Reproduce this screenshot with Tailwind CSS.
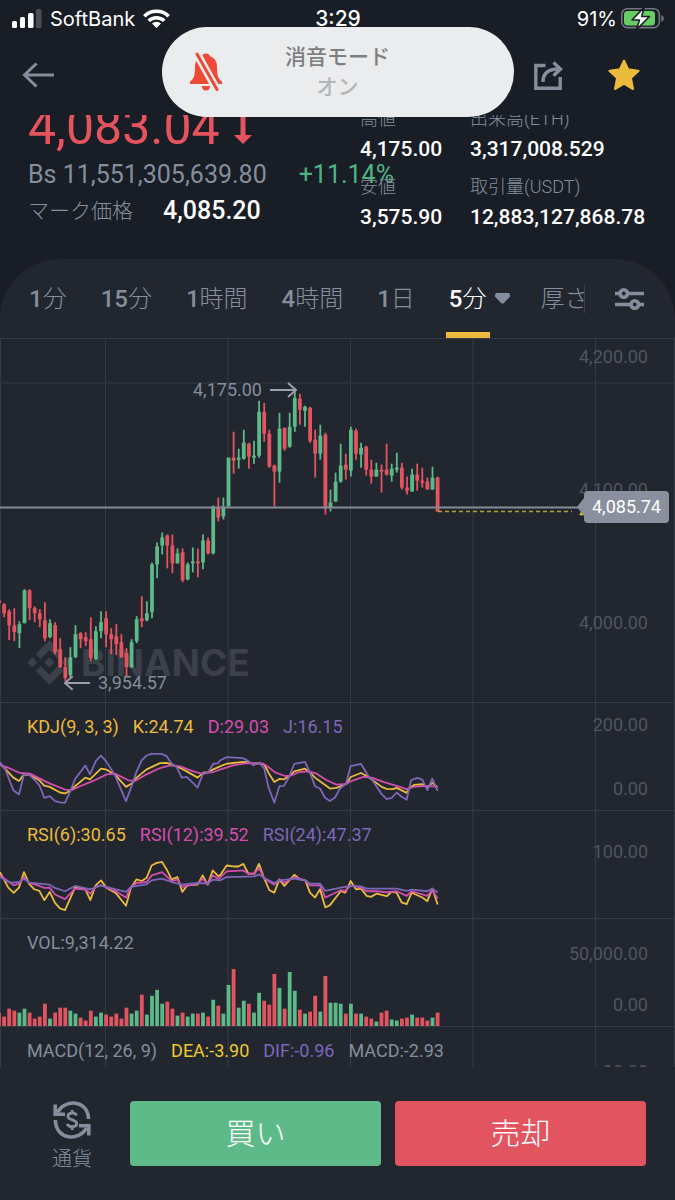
<!DOCTYPE html>
<html lang="ja">
<head>
<meta charset="utf-8">
<meta name="viewport" content="width=device-width, initial-scale=1">
<title>ETH/USDT</title>
<script src="https://cdn.jsdelivr.net/npm/@tailwindcss/browser@4"></script>
</head>
<body class="relative flex min-h-screen flex-col overflow-x-hidden bg-[#191d25] font-['Roboto','Noto_Sans_CJK_JP',sans-serif] text-[#848e9c]">

<!-- Status bar -->
<div class="grid h-[37px] grid-cols-3 items-center pl-3 pr-[11px] font-['Inter','Noto_Sans_CJK_JP',sans-serif] text-[21px] leading-none text-white">
  <div class="flex items-center gap-2">
    <svg class="h-[19px] w-[30px]" viewBox="0 0 30 19" fill="#fff" aria-hidden="true"><rect x="0" y="12" width="5" height="7" rx="1.5"/><rect x="8" y="8" width="5" height="11" rx="1.5"/><rect x="16" y="4" width="5.500" height="15" rx="1.500"/><rect x="24" y="0" width="5.500" height="19" rx="1.500" opacity=".22"/></svg>
    <span class="text-xl">SoftBank</span>
    <svg class="h-[19px] w-[27px]" viewBox="0 0 27 19" fill="none" stroke="#fff" stroke-width="3.600" aria-hidden="true"><path d="M1.300 7.200a17.600 17.600 0 0 1 24.400 0"/><path d="M5.700 11.800a11.300 11.300 0 0 1 15.600 0"/><path d="M9 14.500a6.500 6.500 0 0 1 9 0L13.500 19z" fill="#fff" stroke="none"/></svg>
  </div>
  <div class="text-center font-medium">3:29</div>
  <div class="flex items-center justify-end gap-1">
    <span class="text-xl">91%</span>
    <svg class="h-[21px] w-[43px]" viewBox="0 0 43 21" aria-hidden="true"><rect x=".8" y=".8" width="37.500" height="18.800" rx="5.500" fill="none" stroke="#72767d" stroke-width="1.600"/><rect x="3" y="3" width="31" height="14.500" rx="3.500" fill="#67ce66"/><path d="M40.300 7v7c1.500-.6 2.500-2 2.500-3.500S41.800 7.600 40.300 7z" fill="#72767d"/><path d="M23-.5L11 12h7.500l-3 9.500L28.500 8.500h-7.700z" fill="#fff" stroke="#191d25" stroke-width="1.600" stroke-linejoin="round"/></svg>
  </div>
</div>

<!-- Navigation -->
<header class="flex h-[76px] items-center pl-[22px] pr-[35px]">
  <button class="cursor-pointer" aria-label="戻る"><svg class="h-[26px] w-8" viewBox="0 0 32 26" fill="none" stroke="#848e9c" stroke-width="3"><path d="M14.500 1.500L2.500 13l12 11.500M2.500 13H32"/></svg></button>
  <div class="ml-auto flex items-center gap-[45px]">
    <button class="cursor-pointer" aria-label="共有"><svg class="h-[30px] w-[30px]" viewBox="0 0 30 30" fill="none" stroke="#848e9c" stroke-width="3.400"><path d="M12.500 5.500H2.800v22.700h24.400V17"/><path d="M10 22c0-8 4-13 15.500-13"/><path d="M20.500 2.500L27.500 9l-7 6.800"/></svg></button>
    <button class="cursor-pointer" aria-label="お気に入り"><svg class="h-8 w-8" viewBox="0 0 32 32" fill="#ecba3c" stroke="#ecba3c" stroke-width="2.500" stroke-linejoin="round"><path d="M16 2l4 8.500 10.300 1.400-7.600 7 2 10.900-8.700-5.300-8.700 5.300 2-10.900-7.600-7L12 10.500z"/></svg></button>
  </div>
</header>

<!-- Ticker, scrolled partly under the header -->
<section class="mt-[2px] flex h-[144px] overflow-hidden whitespace-nowrap pl-7">
  <div class="-mt-[18px] w-[332px] shrink-0">
    <div class="flex items-center gap-[14px] text-[50px] leading-[60px] text-[#e5535f]">
      <span>4,083.04</span>
      <svg class="h-[34px] w-[18px]" viewBox="0 0 18 34" fill="#e5535f" aria-hidden="true"><path d="M6.500 0h5v25H18L9 34 0 25h6.500z"/></svg>
    </div>
    <div class="flex gap-8 text-[25px] leading-9"><span>Bs 11,551,305,639.80</span><span class="text-[#4fb483]">+11.14%</span></div>
    <div class="flex gap-[30px] leading-9"><span class="text-[21px] font-light">マーク価格</span><span class="text-[25px] font-medium text-white">4,085.20</span></div>
  </div>
  <dl class="-mt-[10px] w-[110px] shrink-0">
    <dt class="text-lg font-light leading-7">高値</dt>
    <dd class="pb-2 text-[21px] font-medium leading-8 text-white">4,175.00</dd>
    <dt class="text-lg font-light leading-7">安値</dt>
    <dd class="text-[21px] font-medium leading-8 text-white">3,575.90</dd>
  </dl>
  <dl class="-mt-[10px]">
    <dt class="text-lg font-light leading-7">出来高(ETH)</dt>
    <dd class="pb-2 text-[21px] font-medium leading-8 text-white">3,317,008.529</dd>
    <dt class="text-lg font-light leading-7">取引量(USDT)</dt>
    <dd class="text-[21px] font-medium leading-8 text-white">12,883,127,868.78</dd>
  </dl>
</section>

<main class="flex flex-1 flex-col rounded-t-[60px] bg-[#22262f]">
  <!-- Interval tabs -->
  <nav class="flex h-[79px] items-center pl-[29px] pr-[30px]">
    <div class="flex h-full min-w-0 flex-1 items-center gap-[34px] overflow-hidden whitespace-nowrap text-2xl font-light">
      <button class="cursor-pointer"><span class="font-medium">1</span>分</button>
      <button class="cursor-pointer"><span class="font-medium">15</span>分</button>
      <button class="cursor-pointer"><span class="font-medium">1</span>時間</button>
      <button class="cursor-pointer"><span class="font-medium">4</span>時間</button>
      <button class="cursor-pointer"><span class="font-medium">1</span>日</button>
      <button class="relative flex h-full cursor-pointer items-center gap-[9px] text-white"><span><span class="font-medium">5</span>分</span>
        <svg class="h-[11px] w-[15px]" viewBox="0 0 15 11" fill="#848e9c" aria-hidden="true"><path d="M1 0h13l1 1.500V3.500L8.500 10.500h-2L0 3.500v-2z"/></svg>
        <span class="absolute -left-[3px] bottom-0 h-[6px] w-[44px] bg-[#ecba3c]"></span>
      </button>
      <button class="-ml-1 cursor-pointer">厚さ</button>
    </div>
    <span class="h-7 w-px bg-[#3a3f49]"></span>
    <button class="ml-[29px] cursor-pointer" aria-label="設定"><svg class="h-[22px] w-[31px]" viewBox="0 0 31 22" fill="none" stroke="#848e9c" stroke-width="3.600"><path d="M1 5.500h4.500M14 5.500h16M1 16.500h16M25.500 16.500H30"/><circle cx="9.800" cy="5.500" r="3.700"/><circle cx="20.800" cy="16.500" r="3.700"/></svg></button>
  </nav>

  <!-- Price -->
  <section class="relative h-[364px] overflow-hidden border-t border-[#363a44] text-lg">
    <div class="absolute left-[27px] top-[301px] flex items-center gap-[9px] text-[#3b404a]">
      <svg class="h-[45px] w-[45px]" viewBox="0 0 126 126" fill="currentColor" aria-hidden="true"><path d="M38.700 53.200L63 28.900l24.300 24.300 14.100-14.100L63 .7 24.600 39.100zM.7 63l14.100-14.100L28.900 63 14.800 77.100zM38.700 72.800L63 97.100l24.300-24.300 14.200 14.100L63 125.300 24.600 86.900zM97.100 63l14.100-14.100L125.300 63l-14.100 14.100zM77.300 63L63 48.700 48.700 63 63 77.300z"/></svg>
      <span class="font-['Inter',sans-serif] text-[37px] font-bold leading-none">BINANCE</span>
    </div>
    <svg id="price" class="absolute inset-0 h-full w-full" viewBox="0 338 675 364" preserveAspectRatio="none"></svg>
    <div class="relative flex flex-col items-end gap-[109px] pr-[27px] pt-[6px] leading-6 text-[#50555f]"><span>4,200.00</span><span>4,100.00</span><span>4,000.00</span></div>
    <div class="absolute left-[193px] top-[39px] flex items-center gap-2 leading-6">4,175.00
      <svg class="h-4 w-[27px]" viewBox="0 0 27 16" fill="none" stroke="#9aa0ac" stroke-width="2" aria-hidden="true"><path d="M0 8h26M18 1l8 7-8 7"/></svg></div>
    <div class="absolute left-[64px] top-[332px] flex items-center gap-2 leading-6">
      <svg class="h-4 w-[26px]" viewBox="0 0 27 16" fill="none" stroke="#9aa0ac" stroke-width="2" aria-hidden="true"><path d="M27 8H1M9 1L1 8l8 7"/></svg>3,954.57</div>
    <div class="absolute right-[27px] top-[161px] leading-6 text-[#ecba3c]">4,083.04</div>
    <div class="absolute right-[6px] top-[152px] flex items-center">
      <svg class="h-[18px] w-[7px]" viewBox="0 0 7 18" fill="#8b909e" aria-hidden="true"><path d="M7 0L0 9l7 9z"/></svg>
      <span class="rounded bg-[#8b909e] px-2 py-1 leading-6 text-white">4,085.74</span>
    </div>
  </section>

  <!-- KDJ -->
  <section class="relative flex h-[108px] justify-between overflow-hidden border-t border-[#363a44] text-lg">
    <svg id="kdj" class="absolute inset-0 h-full w-full" viewBox="0 6 2025 324" preserveAspectRatio="none"></svg>
    <div class="relative flex h-12 items-center gap-[14px] pl-[27px]"><span class="text-[#ecba3c]">KDJ(9, 3, 3)</span><span class="text-[#ecba3c]">K:24.74</span><span class="text-[#d34fae]">D:29.03</span><span class="text-[#7e66b9]">J:16.15</span></div>
    <div class="relative flex flex-col items-end gap-10 pr-[27px] pt-[10px] leading-6 text-[#50555f]"><span>200.00</span><span>0.00</span></div>
  </section>

  <!-- RSI -->
  <section class="relative flex h-[108px] justify-between overflow-hidden border-t border-[#363a44] text-lg">
    <svg id="rsi" class="absolute inset-0 h-full w-full" viewBox="0 330 2025 324" preserveAspectRatio="none"></svg>
    <div class="relative flex h-12 items-center gap-[14px] pl-[27px]"><span class="text-[#ecba3c]">RSI(6):30.65</span><span class="text-[#d34fae]">RSI(12):39.52</span><span class="text-[#7e66b9]">RSI(24):47.37</span></div>
    <div class="relative pr-[27px] pt-[29px] leading-6 text-[#50555f]">100.00</div>
  </section>

  <!-- Volume -->
  <section class="relative flex h-[108px] justify-between overflow-hidden border-t border-[#363a44] text-lg">
    <svg id="vol" class="absolute inset-0 h-full w-full" viewBox="0 918 675 108" preserveAspectRatio="none"></svg>
    <div class="relative flex h-12 items-center pl-[27px]">VOL:9,314.22</div>
    <div class="relative flex flex-col items-end gap-[27px] pr-[27px] pt-[23px] leading-6 text-[#50555f]"><span>50,000.00</span><span>0.00</span></div>
  </section>

  <!-- MACD -->
  <section class="relative flex h-[41px] justify-between overflow-hidden border-t border-[#363a44] text-lg">
    <svg id="macd" class="absolute inset-0 h-full w-full" viewBox="0 1026 675 40" preserveAspectRatio="none"></svg>
    <div class="relative flex h-12 items-center gap-[14px] pl-[27px]"><span>MACD(12, 26, 9)</span><span class="text-[#ecc92f]">DEA:-3.90</span><span class="text-[#7e66b9]">DIF:-0.96</span><span>MACD:-2.93</span></div>
    <div class="relative pr-[27px] pt-[33px] leading-6 text-[#50555f]">30.00</div>
  </section>

  <!-- Trade bar -->
  <footer class="flex gap-[14px] pb-[34px] pl-7 pr-[29px] pt-[34px]">
    <button class="flex w-[88px] cursor-pointer flex-col items-center gap-[6px] text-xl font-light leading-7">
      <svg class="h-[38px] w-[38px]" viewBox="0 0 38 38" fill="none" stroke="#848e9c" stroke-width="3.600" aria-hidden="true"><path d="M4.500 11.500C11-2 35-2 35.500 18"/><path d="M33.500 27C27 40 3 40 2.300 19"/><path d="M2.200 3.500v9.800H12M35.800 34.500v-9.800H26"/><path d="M23.500 14.500c-1-3.400-8.600-3.400-8.600.7 0 4.600 8.800 2.700 8.800 7.300 0 4.200-8.200 4.200-9.400.3M19.200 9v4M19.200 25v4" stroke-width="2.800"/></svg>
      通貨
    </button>
    <button class="h-[65px] flex-1 cursor-pointer rounded bg-[#5fba89] text-[30px] font-light text-white">買い</button>
    <button class="h-[65px] flex-1 cursor-pointer rounded bg-[#e25460] text-[30px] font-light text-white">売却</button>
  </footer>
</main>

<!-- Silent mode notice -->
<div role="status" class="absolute left-1/2 top-[27px] flex h-[90px] w-[352px] -translate-x-1/2 flex-col items-center justify-center rounded-full bg-[#ebecee] pb-1 font-['Noto_Sans_CJK_JP',sans-serif]">
  <svg class="absolute left-7 top-[25px] h-10 w-8" viewBox="0 0 32 40" aria-hidden="true"><path d="M16 1.500c2.500 0 3.600 1.200 3.900 2.800 5 1.500 7.100 5.500 7.100 10.700 0 9 1.300 12.400 5 14.500V32H0v-2.500C3.700 27.400 5 24 5 15c0-5.200 2.100-9.200 7.100-10.700C12.400 2.700 13.500 1.500 16 1.500zM11.800 34h8.400c-.2 3-1.900 4.500-4.200 4.500S12 37 11.800 34z" fill="#ef4a35"/><path d="M6.500 1l20.500 37" stroke="#ebecee" stroke-width="8"/><path d="M7 2l20 35.500" stroke="#ef4a35" stroke-width="3" stroke-linecap="round"/></svg>
  <span class="text-[21px] font-medium leading-[30px] text-[#7e7f81]">消音モード</span>
  <span class="text-[21px] font-medium leading-[30px] text-[#b4b5b7]">オン</span>
</div>

<script>
const UP = '#5cb988', DOWN = '#e25460';
// Each candle: direction, high, body top, body bottom, low, volume
const candles = `r 599 600 603 604 14|r 603 604 613 617 10|r 609 611 625 640 18|r 608 625 632 641 16|g 621 624 633 648 14|g 589 590 623 623 18|r 589 590 608 620 14|r 606 608 613 622 8|r 609 613 619 627 10|r 602 620 638 641 23
g 619 623 637 638 8|r 622 625 652 654 14|r 638 649 667 668 19|r 657 667 678 681 19|g 647 657 675 677 16|g 625 634 657 658 13|r 632 633 639 648 9|r 632 637 641 646 6|r 617 639 658 661 16|g 626 631 659 660 10
g 611 622 631 638 14|r 611 618 634 647 12|r 628 634 639 654 10|r 624 636 644 655 13|r 634 642 657 658 8|r 648 653 667 677 19|g 639 642 667 668 13|g 616 619 641 643 16|r 596 618 621 627 32|g 601 613 620 621 12
g 562 564 612 618 31|g 542 546 564 578 37|g 532 537 545 554 23|r 534 535 545 568 25|r 534 545 563 573 18|g 548 553 563 563 11|r 548 552 580 582 14|g 562 564 579 580 10|g 547 561 563 572 13|r 548 561 563 577 13
g 534 540 562 569 14|r 537 540 553 554 10|g 505 506 553 554 27|r 497 507 517 521 21|g 497 506 516 519 13|g 457 457 506 506 42|r 431 457 460 473 58|g 448 457 459 468 19|g 429 442 458 459 26|r 442 443 456 468 23
g 440 455 457 463 14|g 400 411 455 457 34|r 402 411 433 441 26|r 429 433 466 467 22|r 464 465 471 506 53|g 412 428 471 482 39|r 427 427 448 450 18|g 412 426 446 447 55|g 389 397 426 431 36|r 393 398 409 424 17
g 405 406 410 426 13|r 406 407 440 442 15|r 429 439 453 477 31|g 424 435 453 459 15|r 432 434 508 514 51|g 489 502 507 511 24|g 472 481 501 501 24|g 443 465 481 482 23|r 453 464 469 479 13|g 426 429 470 476 23
r 428 430 453 459 13|g 442 447 454 467 13|r 445 446 469 475 10|r 459 469 476 483 8|g 462 469 476 476 5|r 464 469 471 492 14|r 443 469 474 475 16|g 463 468 475 481 7|g 452 467 469 472 6|r 462 467 487 489 8
r 476 487 490 494 9|g 468 474 491 491 12|r 463 474 480 490 9|r 467 480 482 487 9|r 477 481 489 489 6|g 466 477 489 489 9|r 476 477 511 511 14`.split(/[|\n]/).map(s => s.split(' '));
const line = (x1, y1, x2, y2, c, w, extra = '') => `<line x1="${x1}" y1="${y1}" x2="${x2}" y2="${y2}" stroke="${c}" stroke-width="${w}" vector-effect="non-scaling-stroke" ${extra}/>`;
const grid = (k, y1, y2) => [0.5, 105.5, 228, 350.5, 473, 595.5, 674.5].map(x => line(x * k, y1, x * k, y2, '#363a44', 1)).join('');
const xAt = i => -1 + i * 5.1;

document.getElementById('price').innerHTML = grid(1, 338, 702)
  + line(0, 382, 675, 382, '#2f333d', 1.5)
  + candles.map(([d, h, t, b, l], i) => {
      const c = d === 'g' ? UP : DOWN, x = xAt(i);
      return line(x, h, x, l, c, 1.8) + `<rect x="${x - 1.9}" y="${t}" width="3.8" height="${Math.max(1.5, b - t)}" fill="${c}"/>`;
    }).join('')
  + line(438, 511, 572, 511, '#b5a232', 1.3, 'stroke-dasharray="4 3"')
  + line(0, 507, 580, 507, '#858a97', 2);

document.getElementById('vol').innerHTML = grid(1, 918, 1026)
  + candles.map((c, i) => `<rect x="${xAt(i) - 1.9}" y="${1026.5 - c[5]}" width="3.8" height="${c[5]}" fill="${c[0] === 'g' ? UP : DOWN}"/>`).join('');

document.getElementById('macd').innerHTML = grid(1, 1026, 1066);

// Indicator series are stored in two runs; the second run starts 660 units in
const series = (color, a, b) => {
  const pts = s => s.split(' ').map(p => p.split(',').map(Number));
  const all = pts(a).filter(p => p[0] < 660).concat(pts(b).map(([x, y]) => [x + 660, y]));
  return `<polyline points="${all.map(p => p.join(',')).join(' ')}" fill="none" stroke="${color}" stroke-width="1.8" stroke-linejoin="round" vector-effect="non-scaling-stroke"/>`;
};
const Y = '#ecba3c', P = '#d34fae', V = '#7e66b9';
document.getElementById('kdj').innerHTML = grid(3, 6, 330)
  + series(Y, '0,190 15,205 40,232 57,242 72,222 90,225 118,240 133,256 149,260 180,277 195,280 210,272 225,258 256,232 270,237 303,205 320,208 345,223 378,260 395,250 410,232 440,207 480,188 500,187 515,192 545,205 560,213 593,232 610,217 625,215 640,207', '0,198 20,190 70,184 85,185 100,190 118,188 133,193 150,225 163,245 178,236 192,237 207,228 223,213 255,205 270,217 285,232 300,243 330,265 350,263 380,250 392,230 423,218 445,230 485,260 500,266 518,267 530,263 560,278 570,262 582,254 607,252 622,262 637,248 653,262')
  + series(P, '0,193 20,200 60,218 90,220 120,235 150,250 195,268 215,270 240,258 280,242 320,222 345,220 385,240 405,242 440,222 480,203 510,195 540,198 580,213 605,220 640,215', '0,208 40,195 80,188 130,190 145,200 165,216 195,227 210,227 240,215 265,213 290,220 320,240 350,253 375,252 400,240 430,230 455,232 490,245 530,257 560,267 580,260 620,257 653,260')
  + series(V, '0,185 15,205 40,270 57,283 72,222 90,225 118,255 133,293 149,288 165,303 180,307 195,308 210,275 225,237 256,195 270,222 287,183 303,165 320,185 345,225 378,303 395,257 410,213 425,180 440,165 455,160 485,160 500,167 515,190 530,200 545,232 560,230 593,262 608,222 625,215 640,190 655,188', '0,180 20,170 70,173 85,182 100,195 118,187 133,205 145,260 163,308 178,258 192,257 207,230 223,190 255,184 270,217 285,258 300,265 315,293 330,303 345,292 360,265 378,250 392,197 423,190 445,228 455,237 485,282 500,297 515,293 530,277 545,290 560,299 573,240 592,233 607,238 622,270 637,235 653,272');
document.getElementById('rsi').innerHTML = grid(3, 330, 654)
  + series(Y, '0,515 25,562 41,578 57,562 72,515 87,550 103,567 118,572 133,600 149,575 165,608 180,625 195,630 225,562 256,567 271,600 287,555 303,540 320,563 347,578 378,617 393,562 410,537 425,542 440,532 455,495 470,487 486,484 500,507 515,537 532,530 547,575 562,555 593,553 608,525 623,553 638,510 655,527', '0,525 20,495 40,498 55,498 70,490 85,520 103,520 117,490 133,535 148,570 163,577 178,537 193,557 223,523 240,537 256,540 270,577 285,592 300,567 316,622 330,615 362,573 376,577 392,542 408,567 423,565 440,587 453,590 470,580 500,588 515,575 530,577 545,607 560,612 575,577 592,585 607,592 622,603 637,565 653,613')
  + series(P, '0,525 41,555 57,550 72,530 87,547 118,557 133,563 149,562 165,583 195,597 225,565 256,568 271,580 287,560 303,555 347,573 378,592 393,560 410,548 440,545 455,525 486,515 515,542 532,538 547,560 593,550 608,535 623,552 638,525 655,535', '0,532 20,513 70,510 85,520 103,520 117,503 133,535 163,553 178,537 193,547 223,530 256,540 270,555 300,555 316,592 362,570 376,572 392,555 423,562 440,573 470,573 500,576 530,573 560,587 575,573 622,587 637,570 653,595')
  + series(V, '0,530 30,547 57,545 72,535 87,547 118,550 149,553 165,563 195,573 225,557 271,567 303,555 347,567 378,575 393,560 440,552 455,540 486,535 515,545 547,553 593,548 623,550 638,538', '0,540 20,530 103,528 117,522 133,533 163,548 178,540 223,535 256,540 270,550 300,550 316,572 362,562 392,557 423,558 440,565 530,565 560,572 575,568 622,573 637,565 653,577');
</script>
</body>
</html>
